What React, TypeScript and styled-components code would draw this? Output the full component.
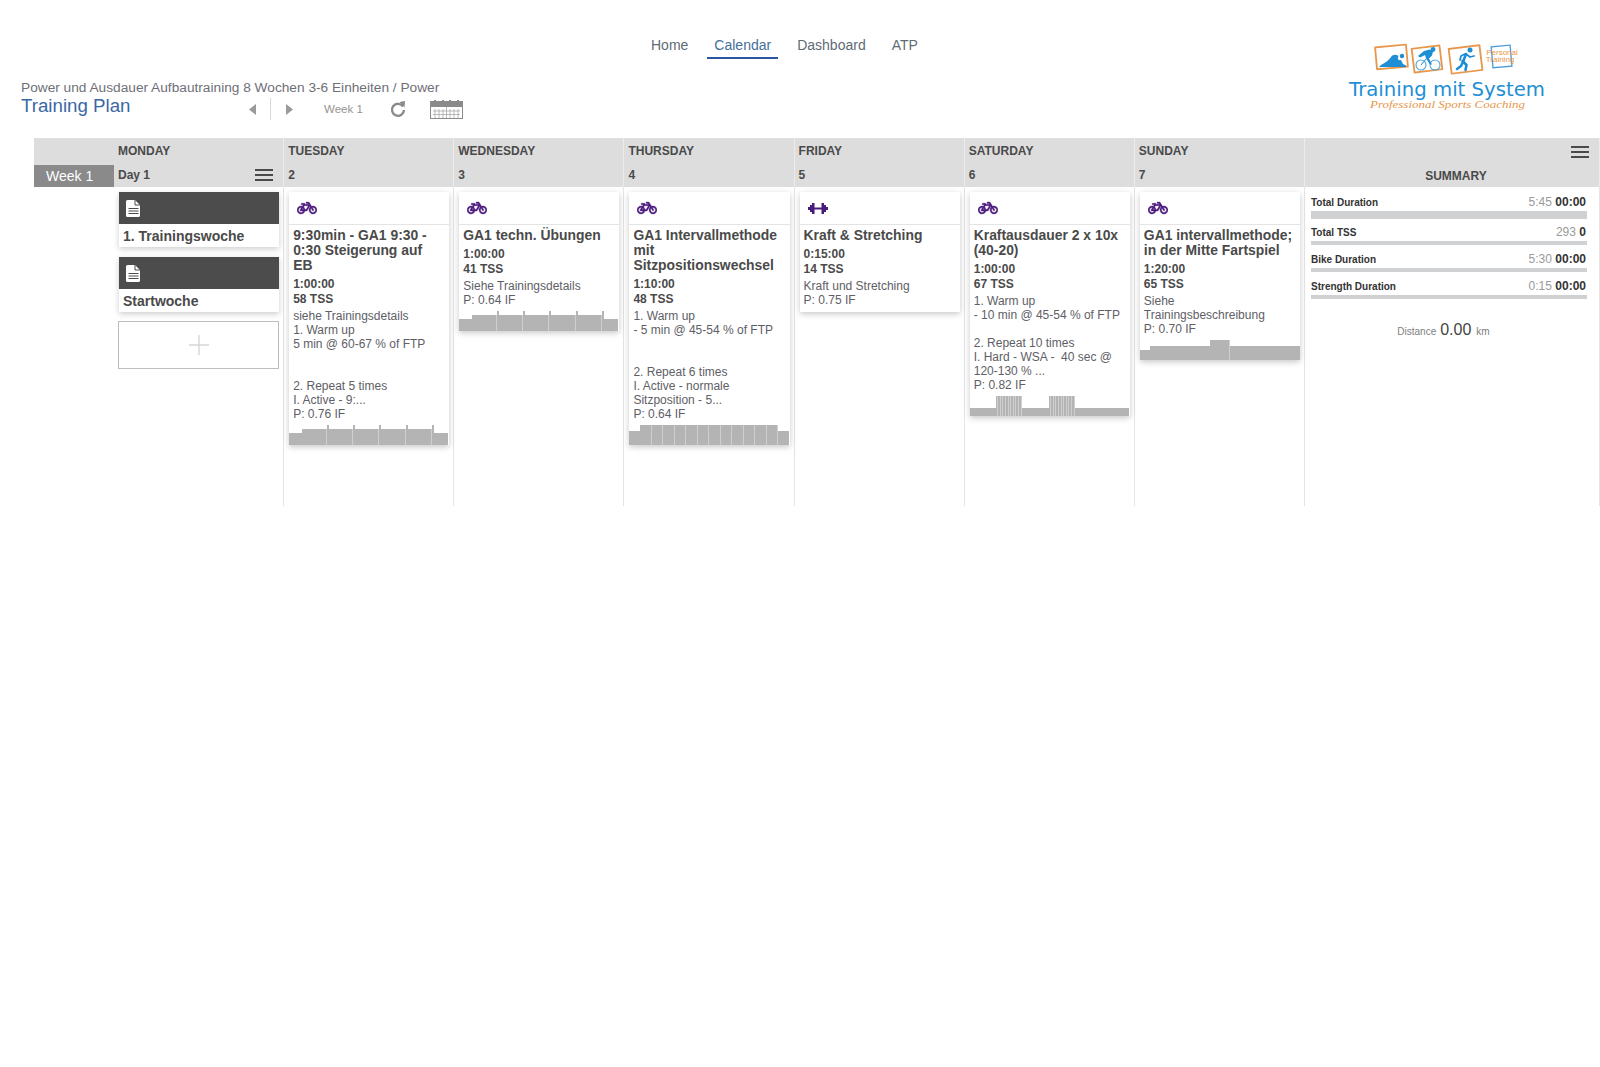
import React from 'react';
import styled, { createGlobalStyle } from 'styled-components';
import { FaBicycle } from 'react-icons/fa';

const GlobalStyle = createGlobalStyle`
  html, body {
    margin: 0;
    padding: 0;
    background: #fff;
    font-family: "Liberation Sans", Arial, sans-serif;
    color: #4a4a4a;
  }
`;

type Step = { w: number; h: number; sep?: boolean };

interface Workout {
  icon: 'bike' | 'strength';
  title: string;
  duration: string;
  tss: string;
  lines: string[];
  chart: Step[];
}

const repeat = (n: number, s: Step) => Array.from({ length: n }, () => s);

const tickedSteps: Step[] = [
  { w: 13, h: 12 },
  ...Array.from({ length: 5 }, () => [{ w: 24.4, h: 16, sep: true }, { w: 2, h: 20 }]).flat(),
  { w: 14, h: 12 },
];

const workouts: Workout[] = [
  {
    icon: 'bike',
    title: '9:30min - GA1 9:30 - 0:30 Steigerung auf EB',
    duration: '1:00:00',
    tss: '58 TSS',
    lines: ['siehe Trainingsdetails', '1. Warm up', '5 min @ 60-67 % of FTP', '', '', '2. Repeat 5 times', 'I. Active - 9:...', 'P: 0.76 IF'],
    chart: tickedSteps,
  },
  {
    icon: 'bike',
    title: 'GA1 techn. Übungen',
    duration: '1:00:00',
    tss: '41 TSS',
    lines: ['Siehe Trainingsdetails', 'P: 0.64 IF'],
    chart: tickedSteps,
  },
  {
    icon: 'bike',
    title: 'GA1 Intervallmethode mit Sitzpositionswechsel',
    duration: '1:10:00',
    tss: '48 TSS',
    lines: ['1. Warm up', '- 5 min @ 45-54 % of FTP', '', '', '2. Repeat 6 times', 'I. Active - normale', 'Sitzposition - 5...', 'P: 0.64 IF'],
    chart: [{ w: 11, h: 14 }, ...repeat(12, { w: 11.5, h: 20, sep: true }), { w: 11, h: 14 }],
  },
  {
    icon: 'strength',
    title: 'Kraft & Stretching',
    duration: '0:15:00',
    tss: '14 TSS',
    lines: ['Kraft und Stretching', 'P: 0.75 IF'],
    chart: [],
  },
  {
    icon: 'bike',
    title: 'Kraftausdauer 2 x 10x (40-20)',
    duration: '1:00:00',
    tss: '67 TSS',
    lines: ['1. Warm up', '- 10 min @ 45-54 % of FTP', '', '2. Repeat 10 times', 'I. Hard - WSA -  40 sec @', '120-130 % ...', 'P: 0.82 IF'],
    chart: [
      { w: 26, h: 8 },
      ...repeat(10, { w: 2.6, h: 20, sep: true }),
      { w: 27, h: 8 },
      ...repeat(10, { w: 2.6, h: 20, sep: true }),
      { w: 54, h: 8 },
    ],
  },
  {
    icon: 'bike',
    title: 'GA1 intervallmethode; in der Mitte Fartspiel',
    duration: '1:20:00',
    tss: '65 TSS',
    lines: ['Siehe', 'Trainingsbeschreibung', 'P: 0.70 IF'],
    chart: [{ w: 10, h: 10 }, { w: 60, h: 14 }, { w: 20, h: 20, sep: true }, { w: 70, h: 14 }],
  },
];

const days = ['TUESDAY', 'WEDNESDAY', 'THURSDAY', 'FRIDAY', 'SATURDAY', 'SUNDAY'];

const summary = [
  { label: 'Total Duration', plan: '5:45', actual: '00:00', thick: true },
  { label: 'Total TSS', plan: '293', actual: '0' },
  { label: 'Bike Duration', plan: '5:30', actual: '00:00' },
  { label: 'Strength Duration', plan: '0:15', actual: '00:00' },
];

const Page = styled.div`
  width: 1600px;
  height: 1067px;
  overflow: hidden;
`;

const TopBar = styled.header`
  height: 138px;
  display: grid;
  grid-template-columns: 600px 1fr 300px;
`;

const TitleBlock = styled.div`
  padding: 80px 0 0 21px;
`;

const Breadcrumb = styled.div`
  font-size: 13.7px;
  line-height: 16px;
  color: #6f6f78;
  white-space: nowrap;
`;

const TitleRow = styled.div`
  display: flex;
  align-items: center;
  height: 26px;
`;

const PlanTitle = styled.h1`
  margin: 0;
  width: 213px;
  align-self: flex-start;
  font-size: 18.7px;
  line-height: 20px;
  font-weight: 400;
  color: #3a68a4;
  white-space: nowrap;
`;

const PagerButton = styled.span`
  width: 36px;
  display: flex;
  justify-content: center;
  color: #9a9a9a;
`;

const PagerDivider = styled.span`
  width: 1px;
  height: 22px;
  background: #d8d8d8;
`;

const WeekName = styled.span`
  margin-left: 17px;
  width: 66px;
  font-size: 11.5px;
  color: #949494;
`;

const ToolIcon = styled.span`
  display: flex;
  margin-right: 24px;
  color: #8a8a8a;
`;

const Nav = styled.nav`
  display: flex;
  align-items: flex-start;
  gap: 12px;
  padding: 33px 0 0 44px;
`;

const NavItem = styled.a<{ $active?: boolean }>`
  padding: 4px 7px;
  font-size: 14px;
  line-height: 16px;
  color: ${p => (p.$active ? '#46709c' : '#5f6b75')};
  border-bottom: 2px solid ${p => (p.$active ? '#2b55a0' : 'transparent')};
`;

const LogoWrap = styled.div`
  padding: 42px 0 0 45px;
`;

const Board = styled.main`
  display: grid;
  grid-template-columns: 80px repeat(7, 170.15px) 295px;
  margin-left: 34px;
`;

const HeadCell = styled.div`
  height: 49px;
  background: #dddddd;
  position: relative;
  border-right: 1px solid #ececec;
  box-sizing: border-box;
  padding: 6px 0 0 4px;
`;

const WeekCell = styled.div`
  height: 49px;
  background: #dddddd;
  display: flex;
  align-items: flex-end;
`;

const WeekLabel = styled.div`
  width: 100%;
  height: 22px;
  background: #8a8a8a;
  color: #fff;
  font-size: 14px;
  line-height: 23px;
  padding-left: 12px;
  box-sizing: border-box;
`;

const DayName = styled.div`
  font-size: 12px;
  line-height: 15px;
  font-weight: 700;
  color: #4a4a4a;
`;

const DayNumber = styled.div`
  margin-top: 9px;
  font-size: 12px;
  line-height: 15px;
  font-weight: 700;
  color: #4a4a4a;
`;

const Burger = styled.span<{ $top: number }>`
  position: absolute;
  right: 10px;
  top: ${p => p.$top}px;
  width: 18px;
  height: 12px;
  box-sizing: border-box;
  border-top: 2px solid #4a4a4a;
  border-bottom: 2px solid #4a4a4a;
  &::after {
    content: '';
    display: block;
    height: 2px;
    margin-top: 3px;
    background: #4a4a4a;
  }
`;

const SummaryTitle = styled.div`
  position: absolute;
  left: 8px;
  right: 0;
  bottom: 3px;
  text-align: center;
  font-size: 12px;
  line-height: 15px;
  font-weight: 700;
  color: #4a4a4a;
`;

const Spacer = styled.div``;

const DayColumn = styled.section`
  height: 319px;
  box-sizing: border-box;
  border-right: 1px solid #e4e4e4;
  padding: 5px 4px 0 5px;
  display: flex;
  flex-direction: column;
  gap: 10px;
`;

const NoteCard = styled.article`
  background: #fff;
  box-shadow: 0 2px 6px rgba(0, 0, 0, 0.2);
`;

const NoteHead = styled.div`
  height: 32px;
  background: #4c4c4c;
  display: flex;
  align-items: center;
  padding-left: 7px;
`;

const NoteTitle = styled.div`
  height: 23px;
  padding-left: 4px;
  font-size: 14px;
  line-height: 24px;
  font-weight: 700;
  color: #4a4a4a;
`;

const AddBox = styled.button`
  height: 48px;
  margin-top: -1px;
  width: 161px;
  margin-left: -1px;
  border: 1px solid #bdbdbd;
  background: #fff;
  display: flex;
  align-items: center;
  justify-content: center;
  padding: 0;
`;

const Card = styled.article`
  background: #fff;
  box-shadow: 0 2px 6px rgba(0, 0, 0, 0.22);
`;

const CardHead = styled.div`
  height: 33px;
  box-sizing: border-box;
  border-bottom: 1px solid #e4e4e4;
  padding-left: 8px;
  display: flex;
  align-items: center;
  color: #4b1a7d;
`;

const CardBody = styled.div`
  padding: 3px 4px 5px 4px;
`;

const CardTitle = styled.h3`
  margin: 0 0 4px;
  padding-right: 2px;
  font-size: 13.9px;
  line-height: 15px;
  font-weight: 700;
  color: #4a4a4a;
`;

const Metric = styled.div`
  font-size: 12px;
  line-height: 15px;
  font-weight: 700;
  color: #4a4a4a;
`;

const DescriptionBlock = styled.div`
  margin-top: 2px;
`;

const Description = styled.div`
  font-size: 12px;
  line-height: 14px;
  min-height: 14px;
  color: #5e5e66;
  white-space: pre;
`;

const Chart = styled.div`
  height: 20px;
  margin-top: -1px;
  display: flex;
  align-items: flex-end;
`;

const ChartStep = styled.div<{ $sep?: boolean }>`
  background: #b4b4b4;
  box-sizing: border-box;
  border-right: ${p => (p.$sep ? '1px solid #cfcfcf' : 'none')};
`;

const SummaryColumn = styled.aside`
  height: 319px;
  padding: 8px 12px 0 6px;
  box-sizing: border-box;
  border-right: 1px solid #e4e4e4;
`;

const SummaryRow = styled.div<{ $gap: number }>`
  margin-bottom: ${p => p.$gap}px;
`;

const SummaryLine = styled.div`
  display: flex;
  justify-content: space-between;
  align-items: baseline;
  height: 15px;
  line-height: 15px;
  padding-right: 1px;
`;

const SummaryLabel = styled.span`
  font-size: 10px;
  font-weight: 700;
  color: #333;
`;

const SummaryValue = styled.span`
  font-size: 12px;
  color: #9a9a9a;
`;

const SummaryActual = styled.b`
  color: #333;
`;

const SummaryBar = styled.div<{ $thick?: boolean }>`
  height: ${p => (p.$thick ? 8 : 4)}px;
  margin-top: 1px;
  background: #d0d1d3;
`;

const Distance = styled.div`
  margin-top: 22px;
  padding-right: 11px;
  text-align: center;
  font-size: 10px;
  color: #808080;
`;

const DistanceValue = styled.span`
  font-size: 16px;
  color: #444;
  margin: 0 5px 0 4px;
`;

const Logo = () => (
  <svg width="215" height="74" viewBox="0 0 215 74">
    <g fill="none" stroke="#e8964a" strokeWidth="1.8" strokeLinejoin="round">
      <rect x="31" y="4" width="31" height="22" transform="rotate(-5 46 15)" />
      <rect x="68" y="5" width="28" height="24" transform="rotate(-7 82 17)" />
      <rect x="105" y="5" width="31" height="25" transform="rotate(-7 120 17)" />
    </g>
    <rect x="147" y="4" width="19" height="21" fill="none" stroke="#4d9bd6" strokeWidth="1.3" transform="rotate(-5 156 14)" />
    <path d="M34 25h27v-1.6l-3 -1.4l-3 -6c-2 -4 -7 -4 -9 -1c-2 3 -6 6 -10 8z" fill="#1e8fd5" />
    <circle cx="55" cy="16" r="2.2" fill="#fff" />
    <circle cx="57" cy="14" r="2.2" fill="#1e8fd5" />
    <g fill="none" stroke="#4da6de" strokeWidth="1.1">
      <circle cx="76" cy="23" r="5" />
      <circle cx="90" cy="23" r="5" />
    </g>
    <path d="M76 23l5 -6" fill="none" stroke="#1e8fd5" strokeWidth="1" />
    <path d="M73 14l6 -5l6 -1.5l3 2l-1 4l-3 3l3 6h-2l-4 -6l-1 -3.5l-5 2.5z" fill="#1e8fd5" />
    <circle cx="88" cy="7.5" r="2.4" fill="#1e8fd5" />
    <g fill="none" stroke="#1e8fd5" strokeWidth="2.6" strokeLinecap="round" strokeLinejoin="round">
      <path d="M121 12l-3 8" />
      <path d="M117.5 19l4 4l-1 5" />
      <path d="M118 20l-2 4l-4 3" />
      <path d="M120 12l-4 2l-1 4" strokeWidth="1.8" />
      <path d="M121 12l4 3l4 -1" strokeWidth="1.8" />
    </g>
    <circle cx="125" cy="8" r="2.5" fill="#1e8fd5" />
    <text x="157" y="13" textAnchor="middle" fontSize="8" fill="#e8964a" fontFamily="Liberation Sans">Personal</text>
    <text x="155" y="20" textAnchor="middle" fontSize="8" fill="#e8964a" fontFamily="Liberation Sans">Training</text>
    <text x="4" y="54" fontSize="19" fill="#1e8fd5" fontFamily="DejaVu Sans" textLength="196" lengthAdjust="spacingAndGlyphs">Training mit System</text>
    <text x="25" y="66" fontSize="11" fontStyle="italic" fill="#e8964a" fontFamily="Liberation Serif" textLength="155" lengthAdjust="spacingAndGlyphs">Professional Sports Coaching</text>
  </svg>
);

const Refresh = () => (
  <svg width="16" height="18" viewBox="0 0 16 18" fill="none">
    <path d="M13 6.5 A6 6 0 1 0 14 10" stroke="currentColor" strokeWidth="2.4" />
    <path d="M9.5 2 L15 1 L14.5 7.5 Z" fill="currentColor" />
  </svg>
);

const CalendarIcon = () => (
  <svg width="33" height="19" viewBox="0 0 33 19">
    <rect x="0.5" y="1.5" width="32" height="17" fill="#fff" stroke="#8a8a8a" />
    <rect x="0" y="1" width="33" height="6" fill="#8a8a8a" />
    <path d="M5 0v2M13 0v2M20 0v2M28 0v2" stroke="#8a8a8a" strokeWidth="2" />
    <path d="M16.5 7v11M5 9v9M9 9v9M13 9v9M20 9v9M24 9v9M28 9v9M3 11h27M3 14.5h27" stroke="#a8a8a8" strokeWidth="0.8" />
  </svg>
);

const Triangle = ({ flip }: { flip?: boolean }) => (
  <svg width="7" height="11" viewBox="0 0 7 11">
    <path d={flip ? 'M0 0 L7 5.5 L0 11 Z' : 'M7 0 L0 5.5 L7 11 Z'} fill="currentColor" />
  </svg>
);

const NoteIcon = () => (
  <svg width="15" height="17" viewBox="0 0 15 17">
    <path d="M1.5 0H9l5 5v10.5a1.5 1.5 0 0 1 -1.5 1.5h-11A1.5 1.5 0 0 1 0 15.5v-14A1.5 1.5 0 0 1 1.5 0z" fill="#fff" />
    <path d="M9 0v5h5" fill="none" stroke="#4c4c4c" />
    <path d="M2.5 8.5h10M2.5 11h10M2.5 13.5h10" stroke="#4c4c4c" />
  </svg>
);

const DumbbellIcon = () => (
  <svg width="20" height="11" viewBox="0 0 20 11" fill="currentColor">
    <path d="M0 4h2v-2h2v-2h2.5v4.5h7v-4.5h2.5v2h2v2h2v3h-2v2h-2v2h-2.5v-4.5h-7v4.5h-2.5v-2h-2v-2h-2z" />
  </svg>
);

const App = () => {
  return (
    <Page>
      <GlobalStyle />
      <TopBar>
        <TitleBlock>
          <Breadcrumb>Power und Ausdauer Aufbautraining 8 Wochen 3-6 Einheiten / Power</Breadcrumb>
          <TitleRow>
            <PlanTitle>Training Plan</PlanTitle>
            <PagerButton>
              <Triangle />
            </PagerButton>
            <PagerDivider />
            <PagerButton>
              <Triangle flip />
            </PagerButton>
            <WeekName>Week 1</WeekName>
            <ToolIcon>
              <Refresh />
            </ToolIcon>
            <ToolIcon>
              <CalendarIcon />
            </ToolIcon>
          </TitleRow>
        </TitleBlock>
        <Nav>
          <NavItem>Home</NavItem>
          <NavItem $active>Calendar</NavItem>
          <NavItem>Dashboard</NavItem>
          <NavItem>ATP</NavItem>
        </Nav>
        <LogoWrap>
          <Logo />
        </LogoWrap>
      </TopBar>
      <Board>
        <WeekCell>
          <WeekLabel>Week 1</WeekLabel>
        </WeekCell>
        <HeadCell>
          <DayName>MONDAY</DayName>
          <DayNumber>Day 1</DayNumber>
          <Burger $top={31} />
        </HeadCell>
        {days.map((day, i) => (
          <HeadCell key={day}>
            <DayName>{day}</DayName>
            <DayNumber>{i + 2}</DayNumber>
          </HeadCell>
        ))}
        <HeadCell>
          <Burger $top={8} />
          <SummaryTitle>SUMMARY</SummaryTitle>
        </HeadCell>

        <Spacer />
        <DayColumn>
          <NoteCard>
            <NoteHead>
              <NoteIcon />
            </NoteHead>
            <NoteTitle>1. Trainingswoche</NoteTitle>
          </NoteCard>
          <NoteCard>
            <NoteHead>
              <NoteIcon />
            </NoteHead>
            <NoteTitle>Startwoche</NoteTitle>
          </NoteCard>
          <AddBox>
            <svg width="20" height="20" viewBox="0 0 20 20">
              <path d="M10 0v20M0 10h20" stroke="#d6d6d6" strokeWidth="1.4" />
            </svg>
          </AddBox>
        </DayColumn>
        {workouts.map(w => (
          <DayColumn key={w.title}>
            <Card>
              <CardHead>
                {w.icon === 'bike' ? <FaBicycle size={20} stroke="currentColor" strokeWidth={12} /> : <DumbbellIcon />}
              </CardHead>
              <CardBody>
                <CardTitle>{w.title}</CardTitle>
                <Metric>{w.duration}</Metric>
                <Metric>{w.tss}</Metric>
                <DescriptionBlock>
                  {w.lines.map((line, i) => (
                    <Description key={i}>{line}</Description>
                  ))}
                </DescriptionBlock>
              </CardBody>
              {w.chart.length > 0 && (
                <Chart>
                  {w.chart.map((s, i) => (
                    <ChartStep key={i} $sep={s.sep} style={{ width: s.w, height: s.h }} />
                  ))}
                </Chart>
              )}
            </Card>
          </DayColumn>
        ))}
        <SummaryColumn>
          {summary.map((s, i) => (
            <SummaryRow key={s.label} $gap={i === 0 ? 6 : 7}>
              <SummaryLine>
                <SummaryLabel>{s.label}</SummaryLabel>
                <SummaryValue>
                  {s.plan} <SummaryActual>{s.actual}</SummaryActual>
                </SummaryValue>
              </SummaryLine>
              <SummaryBar $thick={s.thick} />
            </SummaryRow>
          ))}
          <Distance>
            Distance<DistanceValue>0.00</DistanceValue>km
          </Distance>
        </SummaryColumn>
      </Board>
    </Page>
  );
};

export default App;
